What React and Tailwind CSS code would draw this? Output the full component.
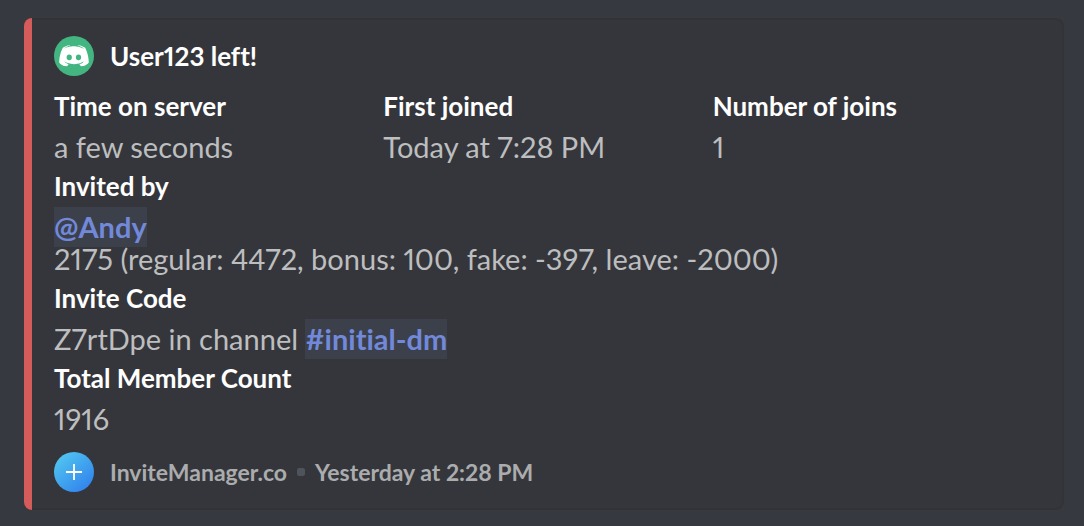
function ServerAvatar() {
  return (
    <svg viewBox="0 0 40 40" className="size-10 shrink-0" role="img" aria-label="Discord">
      <circle cx="20" cy="20" r="20" fill="#43b581" />
      <g transform="translate(5.2 9.2) scale(1.057)">
        <path
          fill="#fff"
          d="M20.6644 20C20.6644 20 19.8014 18.9762 19.0822 18.0714C22.2226 17.1905 23.4212 15.2381 23.4212 15.2381C22.4384 15.881 21.5034 16.3334 20.6644 16.6429C19.4658 17.1429 18.3151 17.4762 17.1884 17.6667C14.887 18.0953 12.7774 17.9762 10.9795 17.6429C9.61301 17.381 8.4384 17 7.45548 16.6191C6.90411 16.4048 6.30479 16.1429 5.70548 15.8096C5.63356 15.7619 5.56164 15.7381 5.48973 15.6905C5.44178 15.6667 5.4178 15.6429 5.39383 15.6191C4.96233 15.381 4.7226 15.2143 4.7226 15.2143C4.7226 15.2143 5.87329 17.1191 8.91781 18.0238C8.19863 18.9286 7.31164 20 7.31164 20C2.0137 19.8333 0 16.381 0 16.381C0 8.7144 3.45205 2.50017 3.45205 2.50017C6.90411 -0.07123 10.1884 0.000198 10.1884 0.000198L10.4281 0.285909C6.11301 1.52399 4.12329 3.40493 4.12329 3.40493C4.12329 3.40493 4.65068 3.11921 5.53768 2.71445C8.10274 1.59541 10.1404 1.2859 10.9795 1.21447C11.1233 1.19066 11.2432 1.16685 11.387 1.16685C12.8493 0.976379 14.5034 0.92876 16.2295 1.11923C18.5068 1.38114 20.952 2.04779 23.4452 3.40493C23.4452 3.40493 21.5514 1.61922 17.476 0.381146L17.8116 0.000198C17.8116 0.000198 21.0959 -0.07123 24.5479 2.50017C24.5479 2.50017 28 8.7144 28 16.381C28 16.381 25.9623 19.8333 20.6644 20Z"
        />
        <ellipse cx="9.517" cy="11.524" rx="2.45" ry="2.643" fill="#43b581" />
        <ellipse cx="18.267" cy="11.524" rx="2.45" ry="2.643" fill="#43b581" />
      </g>
    </svg>
  );
}

function BotAvatar() {
  return (
    <svg viewBox="0 0 40 40" className="size-10 shrink-0" role="img" aria-label="InviteManager">
      <defs>
        <linearGradient id="bot-fill" x1="0.15" y1="0.1" x2="0.85" y2="0.9">
          <stop offset="0" stopColor="#50c4f0" />
          <stop offset="1" stopColor="#3284ed" />
        </linearGradient>
      </defs>
      <circle cx="20" cy="20" r="20" fill="url(#bot-fill)" />
      <path d="M20 12v16M12 20h16" stroke="#fff" strokeWidth="1.8" />
    </svg>
  );
}

function Field({ name, children }) {
  return (
    <div>
      <dt className="mb-[7px] text-[26px] leading-9 font-bold text-white">{name}</dt>
      <dd className="text-[29px] leading-8 text-[#bdbebf]">{children}</dd>
    </div>
  );
}

function Mention({ children }) {
  return (
    <a href="#" className="bg-[#3b404b] pt-0.5 pb-[3px] font-bold text-[#7289da]">
      {children}
    </a>
  );
}

export default function App() {
  return (
    <main className="min-h-screen bg-[#36393f] px-5 pt-[18px] pb-4 pl-6 font-['Lato','Noto_Sans',sans-serif] proportional-nums [font-variant-ligatures:none]">
      <article className="flex overflow-hidden rounded-lg">
        <div className="w-2 shrink-0 bg-[#d65b5b]" />
        <div className="grow rounded-r-lg border-2 border-l-0 border-[#323337] bg-[#35363b] py-4 pr-5 pl-[22px]">
          <header className="flex items-center gap-4">
            <ServerAvatar />
            <h1 className="text-[26px] leading-10 font-bold text-white">User123 left!</h1>
          </header>
          <dl className="mt-3 flex flex-col gap-[5px]">
            <div className="grid grid-cols-3">
              <Field name="Time on server">a few seconds</Field>
              <Field name="First joined">Today at 7:28 PM</Field>
              <Field name="Number of joins">1</Field>
            </div>
            <Field name="Invited by">
              <Mention>@Andy</Mention>
              <br />
              2175 (regular: 4472, bonus: 100, fake: -397, leave: -2000)
            </Field>
            <Field name="Invite Code">
              Z7rtDpe in channel <Mention>#initial-dm</Mention>
            </Field>
            <Field name="Total Member Count">1916</Field>
          </dl>
          <footer className="mt-[17px] flex items-center text-[23px] leading-10 font-bold text-[#abacae]">
            <BotAvatar />
            <span className="ml-4">InviteManager.co</span>
            <span className="mx-2.5 size-2 rounded-xs bg-[#4f545c]" />
            <time>Yesterday at 2:28 PM</time>
          </footer>
        </div>
      </article>
    </main>
  );
}
